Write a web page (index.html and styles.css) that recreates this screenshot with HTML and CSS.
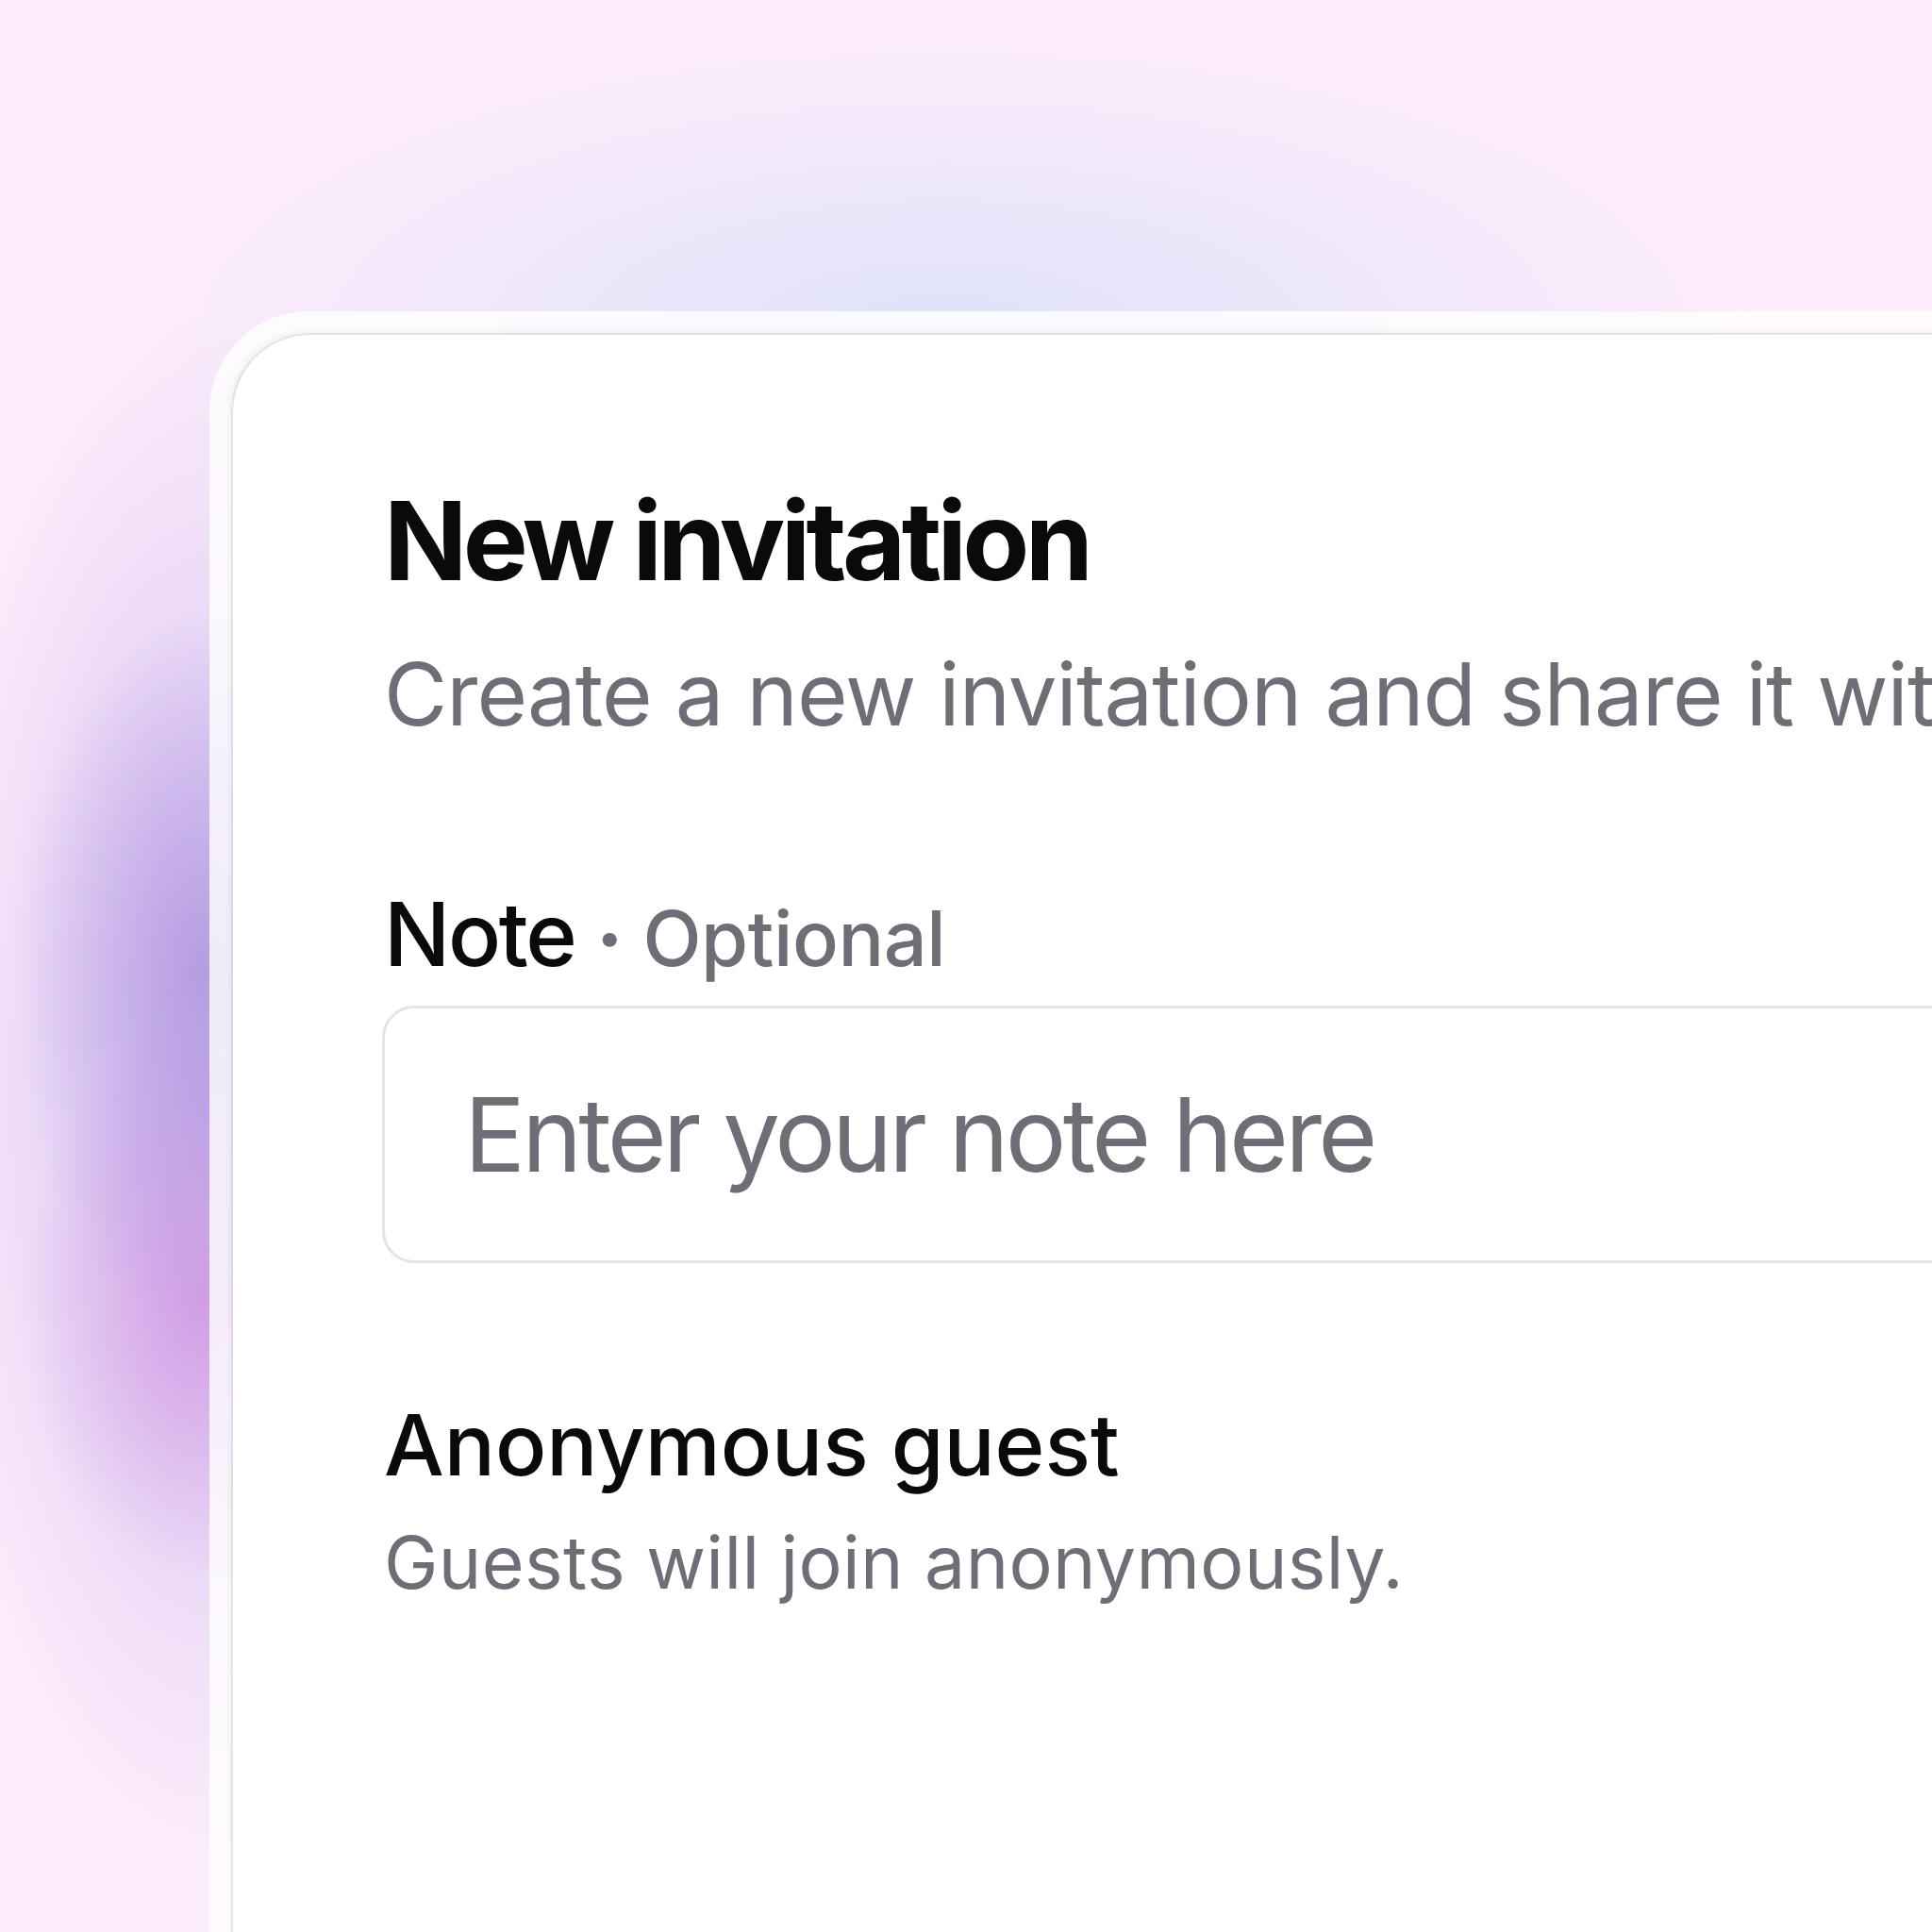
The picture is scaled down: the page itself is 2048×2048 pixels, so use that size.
FILE: index.html
```html
<!DOCTYPE html>
<html lang="en">
<head>
    <meta charset="UTF-8">
    <meta name="viewport" content="width=device-width, initial-scale=1.0">
    <title>New invitation</title>
    <link rel="stylesheet" href="styles.css">
</head>
<body>
    <div class="frame">
        <div class="card">
            <h1>New invitation</h1>
            <p class="subtitle">Create a new invitation and share it with your guests</p>

            <label class="field-label" for="note">Note <span class="optional"><span class="dot">&middot;</span> Optional</span></label>
            <input class="note-input" id="note" type="text" placeholder="Enter your note here">

            <div class="option">
                <h2>Anonymous guest</h2>
                <p>Guests will join anonymously.</p>
            </div>
        </div>
    </div>
</body>
</html>
```

FILE: styles.css
```css
html, body {
    height: 100%;
}

body {
    margin: 0;
    overflow: hidden;
    font-family: 'Inter', 'Noto Sans', sans-serif;
    background:
        radial-gradient(ellipse 200px 380px at 215px 1030px, rgba(168, 140, 220, 0.7), transparent),
        radial-gradient(ellipse 190px 300px at 215px 1380px, rgba(206, 140, 222, 0.7), transparent),
        radial-gradient(ellipse 320px 820px at 230px 1150px, rgba(196, 178, 238, 0.8), transparent),
        radial-gradient(ellipse 860px 330px at 1000px 360px, rgba(222, 226, 250, 1), transparent),
        #fdecfb;
}

.frame {
    margin: 330px 0 0 222px;
    width: 2400px;
    height: 2000px;
    padding: 25px 0 0 25px;
    border-radius: 106px 0 0 0;
    background: rgba(255, 255, 255, 0.8);
}

.card {
    height: 100%;
    padding: 158px 0 0 160px;
    background: #fff;
    border-radius: 82px 0 0 0;
    box-shadow: 0 0 0 2px rgba(0, 0, 0, 0.05), -3px -3px 6px rgba(0, 0, 0, 0.06);
    white-space: nowrap;
    overflow: hidden;
}

h1 {
    margin: 0;
    font-size: 116px;
    line-height: 120px;
    font-weight: 650;
    letter-spacing: -0.04em;
    color: #0a0a0a;
}

.subtitle {
    margin: 57px 0 0;
    font-size: 92px;
    line-height: 1;
    color: #6e6e76;
    letter-spacing: -0.01em;
}

.field-label {
    display: block;
    margin-top: 162px;
    font-size: 93px;
    line-height: 1;
    font-weight: 500;
    letter-spacing: -0.025em;
    color: #0a0a0a;
}

.optional {
    font-size: 81px;
    color: #6e6e76;
    letter-spacing: -0.005em;
}

.dot {
    font-weight: 800;
}

.note-input {
    display: block;
    box-sizing: border-box;
    margin-top: 29px;
    margin-left: -2px;
    width: 2200px;
    height: 273px;
    padding: 0 0 0 84px;
    border: 3px solid #e4e4e7;
    border-radius: 34px;
    font-family: inherit;
    font-size: 108px;
    letter-spacing: -0.035em;
    outline: none;
}

.note-input::placeholder {
    color: #6e6e76;
}

.option {
    margin-top: 148px;
}

.option h2 {
    margin: 0;
    font-size: 90px;
    line-height: 1;
    font-weight: 500;
    letter-spacing: 0;
    color: #0a0a0a;
}

.option p {
    margin: 41px 0 0;
    font-size: 77px;
    line-height: 1;
    color: #6e6e76;
    letter-spacing: 0.005em;
}
```
